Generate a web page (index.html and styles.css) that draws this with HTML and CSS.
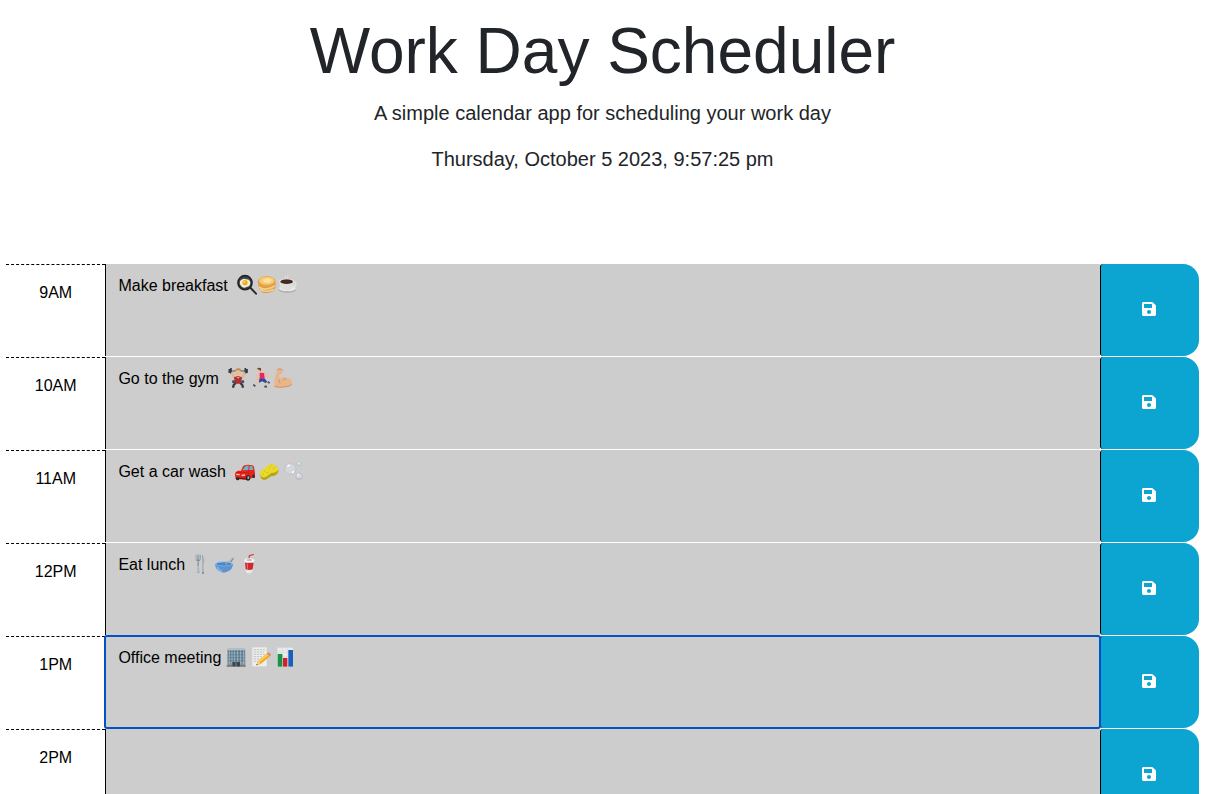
FILE: index.html
```html
<!DOCTYPE html>
<html lang="en">
<head>
<meta charset="utf-8">
<meta name="viewport" content="width=device-width, initial-scale=1">
<title>Work Day Scheduler</title>
<link rel="stylesheet" href="styles.css">
</head>
<body>
<svg class="sprite" aria-hidden="true">
  <symbol id="save" viewBox="0 0 448 512"><path d="M433.941 129.941l-83.882-83.882A48 48 0 0 0 316.118 32H48C21.49 32 0 53.49 0 80v352c0 26.51 21.49 48 48 48h352c26.51 0 48-21.49 48-48V163.882a48 48 0 0 0-14.059-33.941zM224 416c-35.346 0-64-28.654-64-64 0-35.346 28.654-64 64-64s64 28.654 64 64c0 35.346-28.654 64-64 64zm96-304.52V212c0 6.627-5.373 12-12 12H76c-6.627 0-12-5.373-12-12V108c0-6.627 5.373-12 12-12h228.52c3.183 0 6.235 1.264 8.485 3.515l3.48 3.48A11.996 11.996 0 0 1 320 111.48z"/></symbol>
</svg>
<header class="header">
  <h1 class="title">Work Day Scheduler</h1>
  <p class="lead">A simple calendar app for scheduling your work day</p>
  <p class="lead">Thursday, October 5 2023, 9:57:25 pm</p>
</header>
<main class="schedule">
  <section class="block">
    <label class="hour" for="hour-9">9AM</label>
    <div class="entry">
      <textarea class="description" id="hour-9">Make breakfast</textarea>
      <svg class="emoji emoji-breakfast" viewBox="0 0 270 90" aria-hidden="true">
        <path d="M77 54l16 17" stroke="#292c2d" stroke-width="6" stroke-linecap="round"/>
        <circle cx="60" cy="38" r="21" fill="#42494a" stroke="#202526" stroke-width="5"/>
        <path d="M47 31q9-8 16-3 11-1 13 10-1 12-10 12-10 7-17-1-8-8-2-18z" fill="#f2f0dc"/>
        <circle cx="60" cy="38" r="8" fill="#f5ab19"/><circle cx="58" cy="36" r="3" fill="#ffd65c"/>
        <path d="M99 38q2 26 16 30 14 4 31-5 7-7 6-25z" fill="#d79a4d"/>
        <path d="M101 51q22 14 50-4M105 59q22 10 43-1" stroke="#f3d38b" stroke-width="5" fill="none"/>
        <ellipse cx="125" cy="35" rx="27" ry="17" fill="#e5a348"/><ellipse cx="125" cy="32" rx="23" ry="12" fill="#f7c977"/>
        <path d="M113 29l17-5 12 6-10 9-15-2z" fill="#ffe29a"/>
        <ellipse cx="187" cy="58" rx="27" ry="10" fill="#aaa9a5"/><ellipse cx="187" cy="55" rx="26" ry="9" fill="#e9e8e4"/>
        <path d="M202 37q14-3 10 8-3 8-15 7" fill="none" stroke="#e5e5e2" stroke-width="4"/>
        <path d="M163 34q0 24 15 27h15q14-5 13-27z" fill="#dedfdd"/><ellipse cx="185" cy="34" rx="22" ry="8" fill="#eeeeec"/><ellipse cx="185" cy="35" rx="19" ry="7" fill="#422a22"/>
        <path d="M181 28q-5-5 1-10M189 28q-4-6 1-13" stroke="#e8e8e8" stroke-width="2" fill="none"/>
      </svg>
    </div>
    <button class="save" type="button" aria-label="Save 9AM"><svg class="save-icon"><use href="#save"/></svg></button>
  </section>
  <section class="block">
    <label class="hour" for="hour-10">10AM</label>
    <div class="entry">
      <textarea class="description" id="hour-10">Go to the gym</textarea>
      <svg class="emoji emoji-gym" viewBox="0 0 270 90" aria-hidden="true">
        <path d="M17 24h46" stroke="#555d61" stroke-width="3"/>
        <path d="M18 15v17M61 15v17M13 18v12M66 18v12" stroke="#303d43" stroke-width="5"/>
        <path d="M20 28l7 15 9 4M59 28l-7 15-9 4" stroke="#e4b48d" stroke-width="7" fill="none"/>
        <circle cx="39" cy="29" r="9" fill="#eabd98"/><path d="M30 28q0-12 10-12t9 11l-4-5H34z" fill="#bc8a45"/>
        <path d="M27 43l12-4 12 4-3 19H30z" fill="#b62d2c"/><path d="M35 42l4 5 5-5z" fill="#e4b48d"/>
        <path d="M32 60l-6 6-2 8M46 60l6 6 2 8" stroke="#343c45" stroke-width="7" fill="none"/><circle cx="26" cy="56" r="5" fill="#3b5873"/><circle cx="53" cy="56" r="5" fill="#3b5873"/>
        <path d="M108 33l13-2 9 12M107 33l-10 5-3 10 9 3" stroke="#edbd9d" stroke-width="5" fill="none"/>
        <path d="M104 29l13 1 3 22-16 1z" fill="#ec2465"/><circle cx="103" cy="21" r="7" fill="#edbd9d"/><path d="M96 18q4-7 12-2v9l-5-5z" fill="#684234"/>
        <path d="M105 54l-9 7-8 6M117 52l8 7-5 12" stroke="#edbd9d" stroke-width="5" fill="none"/><path d="M103 47l17 1 7 8-6 4-9-5-10 4z" fill="#234ca1"/>
        <path d="M85 65l6 5M118 71h8M128 57l6 3" stroke="#34466b" stroke-width="5"/>
        <path d="M157 19l8-4 8 5-1 12-8 2-1 15q10-12 22-3 10-3 16 8v12q-15 12-33 8-19 4-20-5 0-28 6-40z" fill="#e9b68b"/>
        <path d="M157 20l8-3 8 5M163 49q-3 8 2 12M184 46q-8 1-9 7M148 69q16 7 33 2 13 0 19-7" stroke="#bd845d" stroke-width="2" fill="none"/>
      </svg>
    </div>
    <button class="save" type="button" aria-label="Save 10AM"><svg class="save-icon"><use href="#save"/></svg></button>
  </section>
  <section class="block">
    <label class="hour" for="hour-11">11AM</label>
    <div class="entry">
      <textarea class="description" id="hour-11">Get a car wash</textarea>
      <svg class="emoji emoji-wash" viewBox="0 0 270 90" aria-hidden="true">
        <path d="M30 59q-1-10 8-15h10l6-13q4-6 22-4 10 0 11 7l3 16-1 14-27 8-29-4z" fill="#e8231d"/>
        <path d="M52 43l7-11q8-4 12-3l-1 13zM74 29q8 0 9 4l2 9H73z" fill="#69b4c8"/>
        <path d="M32 50h36M70 44v22" stroke="#b81a17" stroke-width="2"/><path d="M34 55l10 1M50 58l10-1" stroke="#ffd1a0" stroke-width="4"/><path d="M32 66l30 2" stroke="#542222" stroke-width="4"/>
        <ellipse cx="38" cy="69" rx="5" ry="4" fill="#26292b"/><ellipse cx="69" cy="66" rx="7" ry="8" fill="#26292b"/><ellipse cx="70" cy="65" rx="3" ry="4" fill="#aaa"/><ellipse cx="86" cy="61" rx="4" ry="6" fill="#333"/>
        <path d="M104 54l4 13q7 9 18 2l12-8q18-1 22-14l-1-13z" fill="#b5a711"/>
        <path d="M105 49q5-11 17-14 5-9 15-11 7-2 14 5 11 3 8 13-5 9-20 9-6 5-12 9-12 9-20-1-4-5-2-10z" fill="#e8d92c"/>
        <path d="M117 45h2M132 35h2M145 38h2M127 50h2M150 32h2M114 55h2M139 29h2" stroke="#b4a91c" stroke-width="3"/>
        <circle cx="196" cy="39" r="17" fill="#d3d8db" stroke="#aabdc6" stroke-width="2"/><path d="M182 47q8 12 22 5M184 29q6-9 17-6" stroke="#edb9c4" stroke-width="3" fill="none"/><path d="M187 31l7-4M206 46l-4 5" stroke="#fff" stroke-width="5"/>
        <circle cx="222" cy="61" r="10" fill="#d3dce0" stroke="#a0b8c3" stroke-width="2"/><path d="M214 65q7 8 15 0" stroke="#e4a6b1" stroke-width="3" fill="none"/><path d="M217 56l5-2" stroke="#fff" stroke-width="4"/>
        <circle cx="222" cy="23" r="6" fill="#d4dade" stroke="#acbdc8" stroke-width="2"/><path d="M219 21h4" stroke="#fff" stroke-width="3"/>
      </svg>
    </div>
    <button class="save" type="button" aria-label="Save 11AM"><svg class="save-icon"><use href="#save"/></svg></button>
  </section>
  <section class="block">
    <label class="hour" for="hour-12">12PM</label>
    <div class="entry">
      <textarea class="description" id="hour-12">Eat lunch</textarea>
      <svg class="emoji emoji-lunch" viewBox="0 0 270 90" aria-hidden="true">
        <path d="M47 17v13q0 6 6 7l-1 17-1 18h7l-1-18-1-17q6-2 6-8V17" fill="#7f8d97"/><path d="M49 17v15M54 16v16M59 17v15" stroke="#d9e0e4" stroke-width="2"/><path d="M54 50v21" stroke="#dce3e6" stroke-width="3"/>
        <path d="M66 74V17q7 5 7 17l-2 17 1 23z" fill="#76858f"/><path d="M69 22v48" stroke="#d9e1e5" stroke-width="3"/>
        <path d="M137 47l19-20q6-3 5 3l-17 22" fill="#858889"/><path d="M140 46l18-18" stroke="#c5c6c6" stroke-width="3"/>
        <path d="M105 44q1 18 17 24 10 6 22-1 13-5 16-23z" fill="#5c94d2"/><ellipse cx="132" cy="44" rx="27" ry="8" fill="#9ac6ed"/><ellipse cx="132" cy="45" rx="23" ry="5" fill="#4a86c4"/><path d="M111 53q5 11 16 14" stroke="#87b7e5" stroke-width="4" fill="none"/><path d="M136 46l8-7" stroke="#989b9c" stroke-width="5"/>
        <path d="M207 33l1-13 13-4" stroke="#dc4048" stroke-width="4" fill="none"/><path d="M194 34l4 35q9 9 19 0l5-35z" fill="#e6e8e9"/><path d="M195 41h26l-3 20q-10 4-21 0z" fill="#ce2831"/><ellipse cx="208" cy="34" rx="15" ry="6" fill="#f2f3f3"/><ellipse cx="208" cy="33" rx="9" ry="3" fill="#bbbec1"/><path d="M202 43l1 18" stroke="#f06d70" stroke-width="3"/>
      </svg>
    </div>
    <button class="save" type="button" aria-label="Save 12PM"><svg class="save-icon"><use href="#save"/></svg></button>
  </section>
  <section class="block">
    <label class="hour" for="hour-13">1PM</label>
    <div class="entry">
      <textarea class="description description-active" id="hour-13">Office meeting</textarea>
      <svg class="emoji emoji-meeting" viewBox="0 0 270 90" aria-hidden="true">
        <path d="M37 22l5-4h44l5 4v49H37z" fill="#8094a0"/><path d="M36 21h55" stroke="#bac7cb" stroke-width="5"/><path d="M39 29h50M39 38h50M39 47h50M39 56h50" stroke="#50778d" stroke-width="5"/><path d="M43 23v42M51 23v42M59 23v42M68 23v42M77 23v42M86 23v42" stroke="#b9c5c8" stroke-width="2"/><path d="M52 60h23v14H52z" fill="#3c474d"/><path d="M35 72h18M75 72h17" stroke="#6d726b" stroke-width="5"/><path d="M63 61v13" stroke="#9eabb1" stroke-width="2"/>
        <path d="M112 16h43v57h-43z" fill="#eeeeed"/><path d="M116 23h35M116 30h31M116 37h34M116 44h25M116 51h20M116 58h12" stroke="#a9abad" stroke-width="2" stroke-dasharray="7 2"/><path d="M124 70l5-13 28-23 8 9-28 23z" fill="#f5a91d"/><path d="M131 60l27-22" stroke="#ffd95a" stroke-width="4"/><path d="M156 34l5-3 7 7-3 5z" fill="#df7c83"/><path d="M124 70l5-12 8 8z" fill="#ecd1a3"/><path d="M124 70l5-2-3-3z" fill="#333"/>
        <path d="M187 17h47v58h-47z" fill="#e7e9eb"/><path d="M187 31h47M187 45h47M187 59h47M202 17v58M218 17v58" stroke="#c6cbcf" stroke-width="1"/><path d="M188 36h14v38h-14z" fill="#169447"/><path d="M204 48h13v26h-13z" fill="#d3202e"/><path d="M220 24h14v50h-14z" fill="#1761bd"/>
      </svg>
    </div>
    <button class="save" type="button" aria-label="Save 1PM"><svg class="save-icon"><use href="#save"/></svg></button>
  </section>
  <section class="block">
    <label class="hour" for="hour-14">2PM</label>
    <div class="entry"><textarea class="description" id="hour-14"></textarea></div>
    <button class="save" type="button" aria-label="Save 2PM"><svg class="save-icon"><use href="#save"/></svg></button>
  </section>
</main>
</body>
</html>
```
FILE: styles.css
```css
* { box-sizing: border-box; }
html { overflow: hidden; }
body {
  margin: 0;
  padding: 0 23px 0 6px;
  background: #fff;
  color: #000;
  font: 16px/24px "Liberation Sans", Arial, sans-serif;
}
.sprite { display: none; }
.header {
  padding: 12px 0 74px;
  color: #212529;
  text-align: center;
}
.title {
  margin: 0 0 8px;
  font: 300 64px/78px "Liberation Sans", Arial, sans-serif;
}
.lead {
  margin: 0 0 16px;
  font: 300 20px/30px "Liberation Sans", Arial, sans-serif;
}
.block {
  display: grid;
  grid-template-columns: 1fr 10fr 1fr;
  height: 92px;
  margin-bottom: 1px;
}
.hour {
  padding-top: 16px;
  border-top: 1px dashed #000;
  text-align: center;
}
.entry { position: relative; }
.description {
  display: block;
  width: 100%;
  height: 100%;
  padding: 12px;
  border: 0;
  border-left: 1px solid #000;
  border-radius: 0;
  outline: 0;
  resize: none;
  overflow: hidden;
  background: #cdcdcd;
  color: #000;
  font: 16px/20px "Liberation Sans", Arial, sans-serif;
}
.description-active,
.description:focus {
  border-left-color: transparent;
  border-radius: 2px;
  background-clip: padding-box;
  outline: 2px solid #0052c5;
  outline-offset: -1px;
}
.emoji {
  position: absolute;
  top: 6px;
  width: 90px;
  height: 30px;
  fill: none;
  pointer-events: none;
}
.emoji-breakfast, .emoji-gym, .emoji-wash { left: 120px; }
.emoji-lunch { left: 75px; }
.emoji-meeting { left: 110px; }
.save {
  display: flex;
  align-items: center;
  justify-content: center;
  padding: 0 2px 2px 0;
  border: 0;
  border-left: 1px solid #000;
  border-radius: 3px 16px 16px 3px;
  background: #0ca4d0;
  color: #fff;
  cursor: pointer;
}
.save-icon {
  width: 14px;
  height: 16px;
  fill: currentColor;
}
```
